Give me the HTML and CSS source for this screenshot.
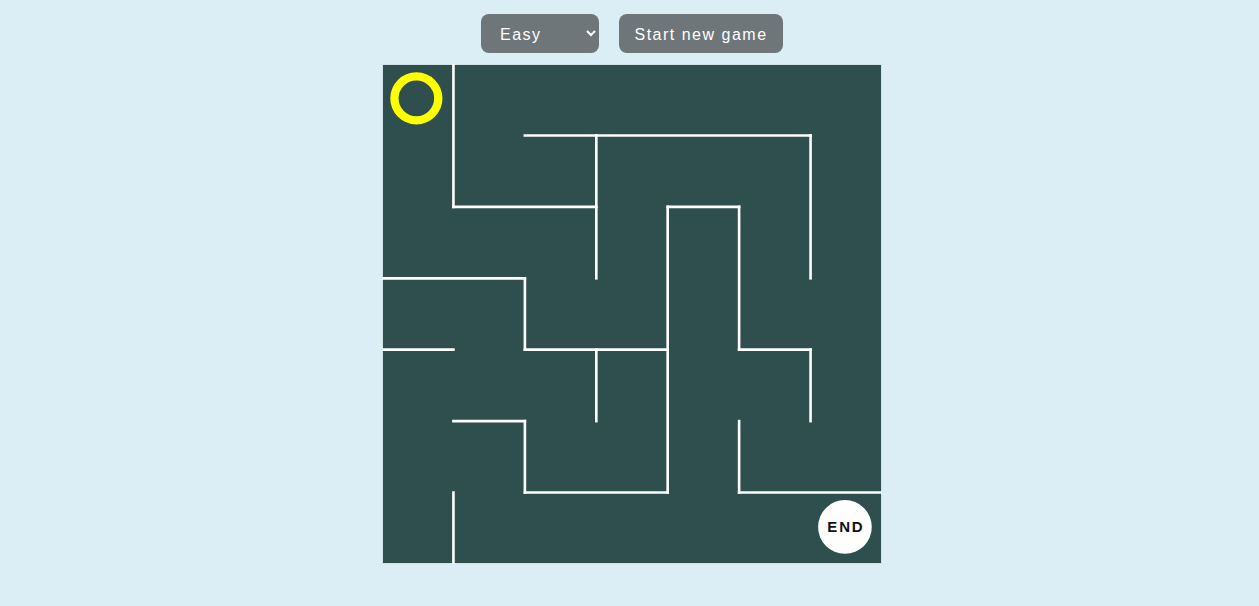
FILE: index.html
```html
<!DOCTYPE html>
<html lang="en">
<head>
<meta charset="utf-8">
<title>Maze</title>
<link rel="stylesheet" href="styles.css">
</head>
<body>
<main class="page">
  <div class="controls">
    <select class="level">
      <option>Easy</option>
      <option>Medium</option>
      <option>Hard</option>
    </select>
    <button class="start" type="button">Start new game</button>
  </div>
  <div class="maze">
    <svg class="board" width="500" height="500" viewBox="0 0 499 499" xmlns="http://www.w3.org/2000/svg">
      <rect x="0.5" y="0.5" width="498" height="498" fill="#2f4f4f" stroke="#cfe3e6" stroke-width="1"/>
      <g stroke="#ffffff" stroke-width="2.6" stroke-linecap="square">
        <line x1="142.6" y1="71.3" x2="427.7" y2="71.3"/>
        <line x1="71.3" y1="142.6" x2="213.9" y2="142.6"/>
        <line x1="285.1" y1="142.6" x2="356.4" y2="142.6"/>
        <line x1="0" y1="213.9" x2="142.6" y2="213.9"/>
        <line x1="0" y1="285.1" x2="71.3" y2="285.1"/>
        <line x1="142.6" y1="285.1" x2="285.1" y2="285.1"/>
        <line x1="356.4" y1="285.1" x2="427.7" y2="285.1"/>
        <line x1="71.3" y1="356.4" x2="142.6" y2="356.4"/>
        <line x1="142.6" y1="427.7" x2="285.1" y2="427.7"/>
        <line x1="356.4" y1="427.7" x2="499" y2="427.7"/>
        <line x1="71.3" y1="0" x2="71.3" y2="142.6"/>
        <line x1="71.3" y1="427.7" x2="71.3" y2="499"/>
        <line x1="142.6" y1="213.9" x2="142.6" y2="285.1"/>
        <line x1="142.6" y1="356.4" x2="142.6" y2="427.7"/>
        <line x1="213.9" y1="71.3" x2="213.9" y2="213.9"/>
        <line x1="213.9" y1="285.1" x2="213.9" y2="356.4"/>
        <line x1="285.1" y1="142.6" x2="285.1" y2="427.7"/>
        <line x1="356.4" y1="142.6" x2="356.4" y2="285.1"/>
        <line x1="356.4" y1="356.4" x2="356.4" y2="427.7"/>
        <line x1="427.7" y1="71.3" x2="427.7" y2="213.9"/>
        <line x1="427.7" y1="285.1" x2="427.7" y2="356.4"/>
      </g>
      <circle cx="34.3" cy="34.3" r="21.9" fill="none" stroke="#ffff00" stroke-width="8.3"/>
      <circle cx="462" cy="462" r="26.8" fill="#ffffff"/>
      <text class="end-label" x="463" y="467" text-anchor="middle">END</text>
    </svg>
  </div>
</main>
</body>
</html>
```
FILE: styles.css
```css
html, body {
  margin: 0;
  padding: 0;
  background: #dbeef5;
  font-family: "Liberation Sans", Arial, sans-serif;
}

.page {
  display: flex;
  flex-direction: column;
  align-items: center;
  padding: 14px 0 0 5px;
}

.controls {
  display: flex;
  gap: 20px;
  height: 39px;
}

.level,
.start {
  height: 39px;
  border: none;
  border-radius: 8px;
  background-color: #6f7679;
  color: #ffffff;
  font-family: "Liberation Sans", Arial, sans-serif;
  font-size: 16px;
  letter-spacing: 1.5px;
  margin: 0;
  white-space: nowrap;
}

.level {
  width: 118px;
  padding: 2px 16px 0 15px;
}

.start {
  width: 164px;
  padding: 2px 0 0;
}

.maze {
  margin-top: 11px;
  width: 500px;
  height: 500px;
}

.board {
  display: block;
}

.end-label {
  font-family: "Liberation Sans", Arial, sans-serif;
  font-weight: bold;
  font-size: 15px;
  letter-spacing: 1.8px;
  fill: #111111;
}
```
